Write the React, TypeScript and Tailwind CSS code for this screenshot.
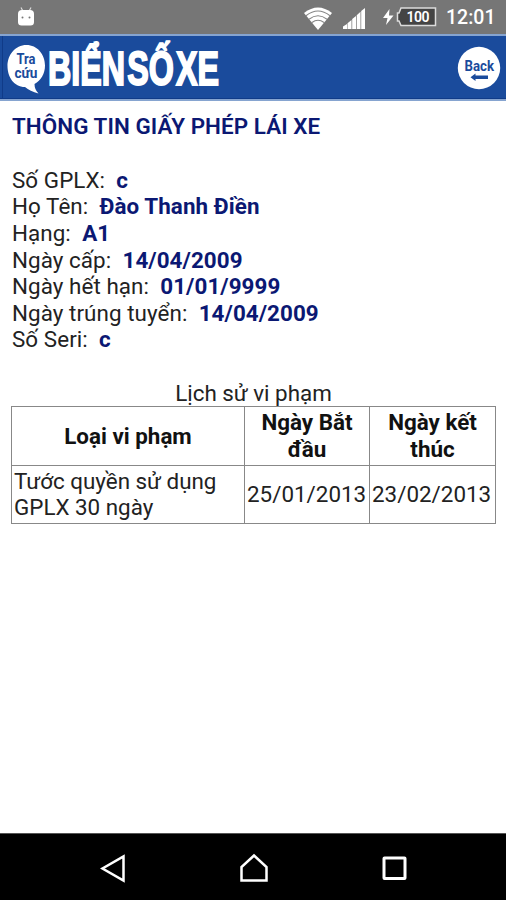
const fields = [
  { label: "Số GPLX:", value: "c" },
  { label: "Họ Tên:", value: "Đào Thanh Điền" },
  { label: "Hạng:", value: "A1" },
  { label: "Ngày cấp:", value: "14/04/2009" },
  { label: "Ngày hết hạn:", value: "01/01/9999" },
  { label: "Ngày trúng tuyển:", value: "14/04/2009" },
  { label: "Số Seri:", value: "c" },
];

const violations = [
  { type: "Tước quyền sử dụng GPLX 30 ngày", from: "25/01/2013", to: "23/02/2013" },
];

function StatusBar() {
  return (
    <div className="flex h-[34px] shrink-0 items-center bg-[#767676] pl-[17px] pr-[10px]">
      <svg width="18" height="20" viewBox="0 0 18 20" fill="#fff">
        <path d="M4 0.5l1.600 3M14 0.5l-1.600 3" stroke="#ddd" strokeWidth="1.200" />
        <path d="M1 7q0-4 4-4h8q4 0 4 4v8q0 3.500-3.500 3.500h-9Q1 18.500 1 15z" />
        <circle cx="5.500" cy="10.500" r="1" fill="#767676" />
        <circle cx="12.500" cy="10.500" r="1" fill="#767676" />
      </svg>
      <svg className="mt-[3px] ml-auto" width="28" height="23" viewBox="0 0 28 23">
        <path d="M0 6Q14-5 28 6L14 23z" fill="#fff" />
        <g fill="none" stroke="#858585" strokeWidth="1.100">
          <path d="M2 8.800q12-9.500 24 0" />
          <path d="M5 12.200q9-7 18 0" />
          <path d="M8 15.500q6-4.500 12 0" />
        </g>
      </svg>
      <svg className="mt-[2px] ml-[11px]" width="22" height="21" viewBox="0 0 22 21" fill="#fff">
        <path d="M0 18.500L4 16v5H0zM4.500 15.200L8.500 12v9h-4zM9.200 11l3.800-3v13H9.200zM13.700 7.200l3.800-3.400V21h-3.800zM18.200 3L22 0v21h-3.800z" />
      </svg>
      <svg className="ml-[18px]" width="54" height="20" viewBox="0 0 54 20">
        <path d="M6.500 2L0 11h4.500L3 18l7.500-9.500H6z" fill="#fff" />
        <path d="M18 1h34.500v17.500H18l-2-4.500h-1.500v-8H16z" fill="#444" stroke="#dcdcdc" strokeWidth="1.500" />
        <text x="35" y="15" fill="#fff" fontFamily="Roboto, sans-serif" fontSize="14" fontWeight="600" textAnchor="middle" textLength="23">
          100
        </text>
      </svg>
      <span className="mt-[2px] ml-[9px] w-[50px] whitespace-nowrap text-[19.500px] font-medium text-white">12:01</span>
    </div>
  );
}

function Header() {
  return (
    <header className="flex h-[67px] shrink-0 items-center justify-between border-t-2 border-b-2 border-t-[#86a4d0] border-b-[#86a4d0] bg-[#1a4b9c]">
      <svg className="overflow-visible" width="240" height="63" viewBox="0 36 240 63">
        <path d="M2.500 36v63M0 98.500h506" stroke="#103b88" strokeWidth="1" />
        <path d="M26.500 45C37 45 45 54 45 65.500c0 8-4 15-10.500 18.500q0 5.500 4 9.500Q30 91 25 87C14 87 7.500 77 7.500 66S15 45 26.500 45z" fill="#fff" />
        <g fill="#1a4b9c" fontFamily="Roboto, sans-serif" fontWeight="700">
          <text x="16.500" y="64" fontSize="15.500" textLength="19" lengthAdjust="spacingAndGlyphs">Tra</text>
          <text x="14.500" y="78" fontSize="15.500" textLength="23" lengthAdjust="spacingAndGlyphs">cứu</text>
        </g>
        <text
          x="48"
          y="85"
          fill="#fff"
          stroke="#fff"
          strokeWidth="2"
          fontFamily="Liberation Sans, sans-serif"
          fontWeight="700"
          fontSize="47.500"
          wordSpacing="-10"
          textLength="171"
          lengthAdjust="spacingAndGlyphs"
        >
          BIỂN SỐ XE
        </text>
      </svg>
      <svg className="mr-[5px]" width="44" height="44" viewBox="0 0 44 44">
        <circle cx="22" cy="22" r="21.200" fill="#fff" />
        <text x="7.500" y="24.500" fill="#1a4b9c" fontFamily="Roboto, sans-serif" fontSize="15.500" fontWeight="700" textLength="29.500" lengthAdjust="spacingAndGlyphs">
          Back
        </text>
        <path d="M13.500 31.200l5-3.700v2h12.500v3.400H18.500v2z" fill="#1a4b9c" />
      </svg>
    </header>
  );
}

function NavBar() {
  return (
    <nav className="flex h-[67px] shrink-0 items-center border-t border-[#555] bg-black pt-[2px] pl-[100px]">
      <svg width="28" height="30" viewBox="0 0 28 30" fill="none" stroke="#fff" strokeWidth="2.500">
        <path d="M23.500 3.500v24L2.500 15.500z" />
      </svg>
      <svg className="ml-[111px]" width="30" height="30" viewBox="0 0 30 30" fill="none" stroke="#fff" strokeWidth="2.500">
        <path d="M15 2.500L27.500 14v13.500h-25V14z" />
      </svg>
      <svg className="ml-[112px]" width="26" height="26" viewBox="0 0 26 26" fill="none" stroke="#fff" strokeWidth="3">
        <rect x="3" y="3" width="21" height="20.500" rx="0.500" />
      </svg>
    </nav>
  );
}

export default function App() {
  return (
    <div className="flex h-[900px] w-[506px] flex-col overflow-hidden bg-white font-['Roboto',sans-serif]">
      <StatusBar />
      <Header />
      <main className="flex-1 px-[11px] pt-[12px] text-[22.400px] leading-[26.640px] text-[#222]">
        <div className="pl-px tracking-[0.070px]">
          <h1 className="mb-[27px] font-semibold text-[#0b1873]">THÔNG TIN GIẤY PHÉP LÁI XE</h1>
          {fields.map((f) => (
            <p key={f.label} className="whitespace-pre">
              {f.label}
              {"  "}
              <b className="font-bold text-[#0b1873]">{f.value}</b>
            </p>
          ))}
        </div>
        <table className="mt-[26.500px] w-[485px] table-fixed border-collapse border border-[#888]">
          <caption>Lịch sử vi phạm</caption>
          <colgroup>
            <col className="w-[233px]" />
            <col className="w-[125px]" />
            <col className="w-[126px]" />
          </colgroup>
          <thead>
            <tr className="h-[58px] text-[#111]">
              <th className="border border-[#888] p-[2px]">Loại vi phạm</th>
              <th className="border border-[#888] p-[2px]">Ngày Bắt đầu</th>
              <th className="border border-[#888] p-[2px]">Ngày kết thúc</th>
            </tr>
          </thead>
          <tbody>
            {violations.map((v) => (
              <tr key={v.from} className="h-[58px]">
                <td className="border border-[#888] p-[2px]">{v.type}</td>
                <td className="border border-[#888] p-[2px]">{v.from}</td>
                <td className="border border-[#888] p-[2px]">{v.to}</td>
              </tr>
            ))}
          </tbody>
        </table>
      </main>
      <NavBar />
    </div>
  );
}
